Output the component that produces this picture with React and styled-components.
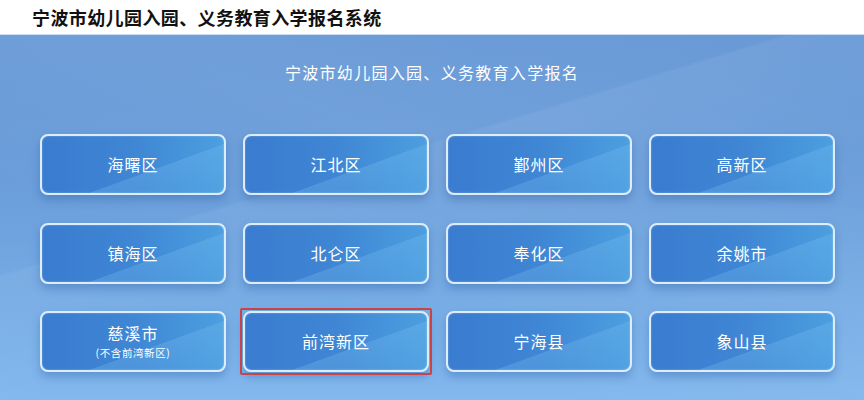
import styled, { createGlobalStyle } from 'styled-components';

const GlobalStyle = createGlobalStyle`
  html, body {
    margin: 0;
    padding: 0;
    background: #fff;
  }
  body {
    font-family: "Noto Sans CJK SC", "Noto Sans", sans-serif;
  }
`;

const Page = styled.div`
  width: 864px;
  height: 400px;
  display: flex;
  flex-direction: column;
  overflow: hidden;
`;

const Header = styled.header`
  height: 34px;
  flex: none;
  display: flex;
  align-items: center;
  padding-left: 32px;
  background: #fff;
  font-size: 18px;
  font-weight: 700;
  color: #111;
  letter-spacing: 0.4px;
`;

const Stage = styled.main`
  flex: 1;
  background:
    linear-gradient(163deg, rgba(255, 255, 255, 0) 0%, rgba(255, 255, 255, 0) 38%, rgba(255, 255, 255, 0.06) 38.5%, rgba(255, 255, 255, 0) 60%),
    linear-gradient(200deg, rgba(255, 255, 255, 0) 0%, rgba(255, 255, 255, 0.05) 40%, rgba(255, 255, 255, 0) 70%),
    linear-gradient(180deg, #6899d6 0%, #6a9dda 40%, #78aee6 80%, #83b8ee 100%);
  border-top: 1px solid #c9dcf2;
  display: flex;
  flex-direction: column;
  align-items: center;
`;

const Subtitle = styled.h1`
  margin: 25px 0 0;
  font-size: 16px;
  font-weight: 400;
  color: #fff;
  letter-spacing: 1.3px;
  line-height: 24px;
`;

const Grid = styled.div`
  margin: 50px 0 0 11px;
  display: grid;
  grid-template-columns: repeat(4, 186px);
  grid-auto-rows: 61px;
  column-gap: 17px;
  row-gap: 27.5px;
`;

const Button = styled.button`
  position: relative;
  border: 2px solid #dcedfd;
  border-radius: 8px;
  padding: 0;
  margin: 0;
  font-family: inherit;
  color: #fff;
  cursor: pointer;
  background:
    linear-gradient(160deg, rgba(255, 255, 255, 0) 0%, rgba(255, 255, 255, 0) 60%, rgba(120, 190, 240, 0.3) 60.5%, rgba(120, 190, 240, 0.1) 100%),
    linear-gradient(90deg, #3a7cd0 0%, #3f86d4 50%, #4c9fe0 100%);
  box-shadow: 0 5px 8px rgba(40, 90, 160, 0.35), inset 0 0 2px rgba(255, 255, 255, 0.4);
  display: flex;
  flex-direction: column;
  align-items: center;
  justify-content: center;

  &::after {
    content: '';
    display: ${({ selected }) => (selected ? 'block' : 'none')};
    position: absolute;
    inset: -5px;
    border: 2px solid #c94444;
    border-radius: 2px;
    pointer-events: none;
  }
`;

const Name = styled.span`
  font-size: 16px;
  font-weight: 400;
  line-height: 19px;
  letter-spacing: 1px;
`;

const Note = styled.span`
  margin-top: 3px;
  font-size: 10.5px;
  line-height: 14px;
  letter-spacing: 0.6px;
`;

const areas = [
  { name: '海曙区' },
  { name: '江北区' },
  { name: '鄞州区' },
  { name: '高新区' },
  { name: '镇海区' },
  { name: '北仑区' },
  { name: '奉化区' },
  { name: '余姚市' },
  { name: '慈溪市', note: '(不含前湾新区)' },
  { name: '前湾新区', selected: true },
  { name: '宁海县' },
  { name: '象山县' }
];

const App = () => (
  <>
    <GlobalStyle />
    <Page>
      <Header>宁波市幼儿园入园、义务教育入学报名系统</Header>
      <Stage>
        <Subtitle>宁波市幼儿园入园、义务教育入学报名</Subtitle>
        <Grid>
          {areas.map(({ name, note, selected }) => (
            <Button key={name} selected={selected}>
              <Name>{name}</Name>
              {note && <Note>{note}</Note>}
            </Button>
          ))}
        </Grid>
      </Stage>
    </Page>
  </>
);

export default App;
